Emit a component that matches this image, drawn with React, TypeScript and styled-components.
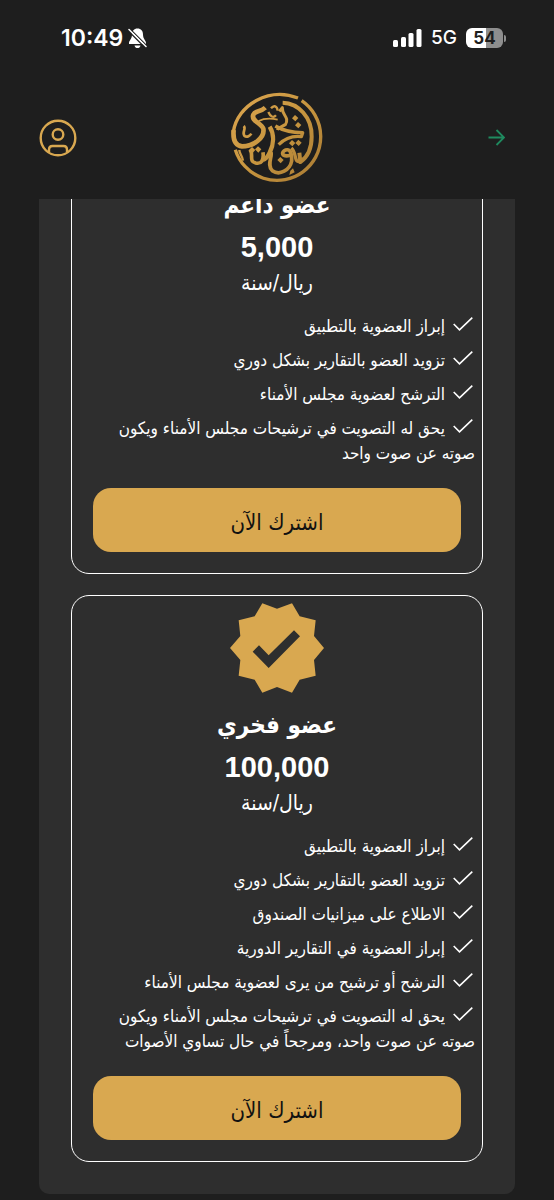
import React from "react";
import styled, { createGlobalStyle } from "styled-components";

const GOLD = "#d9a850";
const textFont = '"DejaVu Sans Condensed", "DejaVu Sans", sans-serif';

const GlobalStyle = createGlobalStyle`
  * { box-sizing: border-box; }
  body {
    margin: 0;
    background: #1e1e1e;
    color: #fff;
    font-family: ${textFont};
  }
`;

const Page = styled.div`
  display: flex;
  flex-direction: column;
`;

const StatusBar = styled.div`
  display: flex;
  justify-content: space-between;
  align-items: center;
  height: 76px;
  padding: 0 48px 0 61px;
  font-family: Inter, sans-serif;
`;

const StatusGroup = styled.div<{ $gap: number }>`
  display: flex;
  align-items: center;
  gap: ${(p) => p.$gap}px;
`;

const Time = styled.span`
  font-size: 23px;
  line-height: 28px;
  font-weight: 600;
`;

const Network = styled.span`
  font-size: 19px;
  line-height: 28px;
  font-weight: 500;
`;

const Battery = styled.span`
  display: flex;
  align-items: center;
  gap: 1px;
`;

const BatteryLevel = styled.span`
  width: 37px;
  border-radius: 6px;
  background: linear-gradient(90deg, #fff 54%, #8e8e8e 54%);
  color: #1e1e1e;
  font-size: 17px;
  line-height: 20px;
  font-weight: 700;
  text-align: center;
`;

const BatteryTip = styled.span`
  width: 2px;
  height: 7px;
  border-radius: 0 2px 2px 0;
  background: #8e8e8e;
`;

const Header = styled.header`
  display: grid;
  grid-template-columns: 1fr auto 1fr;
  align-items: center;
  height: 123px;
  padding: 0 39px;
`;

const IconButton = styled.button<{ $end?: boolean }>`
  display: flex;
  justify-self: ${(p) => (p.$end ? "end" : "start")};
  padding: ${(p) => (p.$end ? "8px 10px" : "0")};
  border: 0;
  background: none;
  color: inherit;
`;

const Viewport = styled.main`
  overflow: hidden;
  padding: 0 39px 6px;
`;

const Panel = styled.section`
  display: flex;
  flex-direction: column;
  gap: 21px;
  margin-top: -156px;
  padding: 32px;
  border-radius: 10px;
  background: #2e2e2e;
`;

const Card = styled.article`
  display: flex;
  flex-direction: column;
  align-items: center;
  padding: 7px 7px 21px;
  border: 1px solid #fff;
  border-radius: 18px;
`;

const PlanName = styled.h2`
  margin: 12px 0 0;
  font-size: 24px;
  line-height: 40px;
  font-weight: 700;
`;

const Price = styled.p`
  margin: 0;
  font-family: "Liberation Sans", sans-serif;
  font-size: 29px;
  line-height: 44px;
  font-weight: 700;
`;

const Period = styled.p`
  margin: 0;
  font-size: 21px;
  line-height: 28px;
`;

const Features = styled.ul`
  display: flex;
  flex-direction: column;
  gap: 9px;
  width: 100%;
  margin: 17px 0 0;
  padding: 0 0 0 14px;
  list-style: none;
  font-size: 17px;
  line-height: 25px;
`;

const Tick = styled.svg`
  width: 20px;
  height: 14px;
  margin: 0 2px 1px 8px;
`;

const Subscribe = styled.button`
  align-self: stretch;
  height: 64px;
  margin: 22px 14px 0;
  padding: 4px 0 0;
  border: 0;
  border-radius: 18px;
  background: ${GOLD};
  color: #111;
  font-family: ${textFont};
  font-size: 22px;
`;

const BellOff = () => (
  <svg width="19" height="21" viewBox="0 0 19 21" aria-hidden="true">
    <path d="M9.500 0.500C6 0.500 4 3 4 6.500C4 11 1 12.500 1 15V16H18V15C18 12.500 15 11 15 6.500C15 3 13 0.500 9.500 0.500ZM6.500 17.500H12.500C12 19.500 11 20 9.500 20S7 19.500 6.500 17.500Z" fill="#fff" />
    <path d="M0 2.500L17 19.500" stroke="#1e1e1e" strokeWidth="1.500" />
    <path d="M1.500 0.500L18.500 17.500" stroke="#1e1e1e" strokeWidth="1.200" />
    <path d="M1 1.500L18 18.500" stroke="#fff" strokeWidth="1.500" strokeLinecap="round" />
  </svg>
);

const Signal = () => (
  <svg width="29" height="18" viewBox="0 0 29 18" aria-hidden="true" fill="#fff">
    <rect x="0" y="11" width="5" height="7" rx="1.500" />
    <rect x="8" y="8" width="5" height="10" rx="1.500" />
    <rect x="15.500" y="4" width="5" height="14" rx="1.500" />
    <rect x="23.500" y="0" width="5" height="18" rx="1.500" />
  </svg>
);

const Profile = () => (
  <svg width="38" height="38" viewBox="0 0 38 38" fill="none" stroke={GOLD} strokeWidth="2.400" aria-hidden="true">
    <circle cx="19" cy="19" r="17.300" />
    <circle cx="19" cy="15.500" r="5.300" />
    <path d="M10 33V30.500Q10 27 13.500 27H24.500Q28 27 28 30.500V33" />
  </svg>
);

const Logo = () => (
  <svg width="92" height="92" viewBox="25 24 276 276" fill="none" role="img" aria-label="شعار">
    <defs>
      <linearGradient id="gold" x1="30" y1="30" x2="290" y2="290" gradientUnits="userSpaceOnUse">
        <stop offset="0" stopColor="#dca650" />
        <stop offset="0.500" stopColor="#c8963f" />
        <stop offset="1" stopColor="#a87a33" />
      </linearGradient>
    </defs>
    <g stroke="url(#gold)" strokeLinejoin="round">
      <path d="M237 50A131 131 0 1 1 38 197" strokeWidth="10" />
      <path d="M226 42C140 8 44 62 32 144" strokeWidth="10" />
      <path d="M33 138C30 170 38 185 58 187C94 187 127 160 122 134C117 117 84 111 92 92C98 78 112 86 128 71" strokeWidth="14" />
      <path d="M180 56C227 57 268 100 267 158C267 190 256 218 233 234L230 206" strokeWidth="12" />
      <path d="M63 126C72 134 57 144 65 155C73 162 83 154 86 149" strokeWidth="8" />
      <path d="M108 111C126 102 142 102 165 107" strokeWidth="5" />
      <path d="M137 84C143 98 152 103 160 94M145 73C154 62 163 66 165 80" strokeWidth="7" />
      <path d="M170 82L179 71C177 94 202 99 188 122C177 128 167 130 164 138" strokeWidth="9" />
      <path d="M158 126C185 142 210 146 240 146L236 158C211 155 187 163 168 182" strokeWidth="10" />
      <path d="M141 128C156 152 153 182 141 206C136 217 130 226 121 228" strokeWidth="13" />
      <path d="M82 196C94 213 77 231 99 237C116 241 124 229 121 205" strokeWidth="11" />
      <path d="M145 205C150 217 131 243 149 260C171 276 202 258 207 231C208 207 202 194 189 198C174 204 176 220 203 214" strokeWidth="11" />
      <path d="M206 192C223 207 213 237 232 232" strokeWidth="10" />
      <path d="M50 198C49 208 59 214 61 230" strokeWidth="7" />
    </g>
    <g fill="url(#gold)">
      <path d="M217 93L227 102L218 112L208 103ZM226 114L236 123L227 133L217 124ZM208 168L218 177L209 187L199 178ZM227 167L237 176L228 186L218 177ZM88 189L98 198L89 208L79 198ZM106 187L116 196L107 206L97 196ZM173 219L183 228L174 238L164 228ZM203 260L211 253L216 265L200 273Z" />
    </g>
  </svg>
);

const Arrow = () => (
  <svg width="17" height="17" viewBox="0 0 17 17" fill="none" stroke="#1f8a5f" strokeWidth="1.800" aria-hidden="true">
    <path d="M0.500 8.500H15.500M8.500 1L16 8.500L8.500 16" />
  </svg>
);

const Badge = () => (
  <svg width="94" height="90" viewBox="510 398 282 270" aria-hidden="true">
    <path
      fill={GOLD}
      fillRule="evenodd"
      d="M607 399L651 415L696 399L719 438L767 450L762 497L792 533L762 569L767 616L719 628L696 667L651 650L607 667L584 628L536 616L541 569L510 533L541 497L536 450L584 438ZM578 544L626 593L720 498L702 480L626 555L597 525Z"
    />
  </svg>
);

interface Plan {
  name: string;
  price: string;
  features: string[];
}

const plans: Plan[] = [
  {
    name: "عضو داعم",
    price: "5,000",
    features: [
      "إبراز العضوية بالتطبيق",
      "تزويد العضو بالتقارير بشكل دوري",
      "الترشح لعضوية مجلس الأمناء",
      "يحق له التصويت في ترشيحات مجلس الأمناء ويكون صوته عن صوت واحد",
    ],
  },
  {
    name: "عضو فخري",
    price: "100,000",
    features: [
      "إبراز العضوية بالتطبيق",
      "تزويد العضو بالتقارير بشكل دوري",
      "الاطلاع على ميزانيات الصندوق",
      "إبراز العضوية في التقارير الدورية",
      "الترشح أو ترشيح من يرى لعضوية مجلس الأمناء",
      "يحق له التصويت في ترشيحات مجلس الأمناء ويكون صوته عن صوت واحد، ومرجحاً في حال تساوي الأصوات",
    ],
  },
];

const PlanCard = ({ plan }: { plan: Plan }) => (
  <Card dir="rtl">
    <Badge />
    <PlanName>{plan.name}</PlanName>
    <Price>{plan.price}</Price>
    <Period>ريال/سنة</Period>
    <Features>
      {plan.features.map((feature) => (
        <li key={feature}>
          <Tick viewBox="0 0 20 14" fill="none" stroke="#fff" strokeWidth="1.600" aria-hidden="true">
            <path d="M0.700 7L6.500 12.800L19.300 0.700" />
          </Tick>
          {feature}
        </li>
      ))}
    </Features>
    <Subscribe type="button">اشترك الآن</Subscribe>
  </Card>
);

export default function App() {
  return (
    <Page>
      <GlobalStyle />
      <StatusBar>
        <StatusGroup $gap={5}>
          <Time>10:49</Time>
          <BellOff />
        </StatusGroup>
        <StatusGroup $gap={9}>
          <Signal />
          <Network>5G</Network>
          <Battery>
            <BatteryLevel>54</BatteryLevel>
            <BatteryTip />
          </Battery>
        </StatusGroup>
      </StatusBar>
      <Header>
        <IconButton type="button" aria-label="الحساب"><Profile /></IconButton>
        <Logo />
        <IconButton type="button" aria-label="رجوع" $end><Arrow /></IconButton>
      </Header>
      <Viewport>
        <Panel>
          {plans.map((plan) => <PlanCard key={plan.name} plan={plan} />)}
        </Panel>
      </Viewport>
    </Page>
  );
}
